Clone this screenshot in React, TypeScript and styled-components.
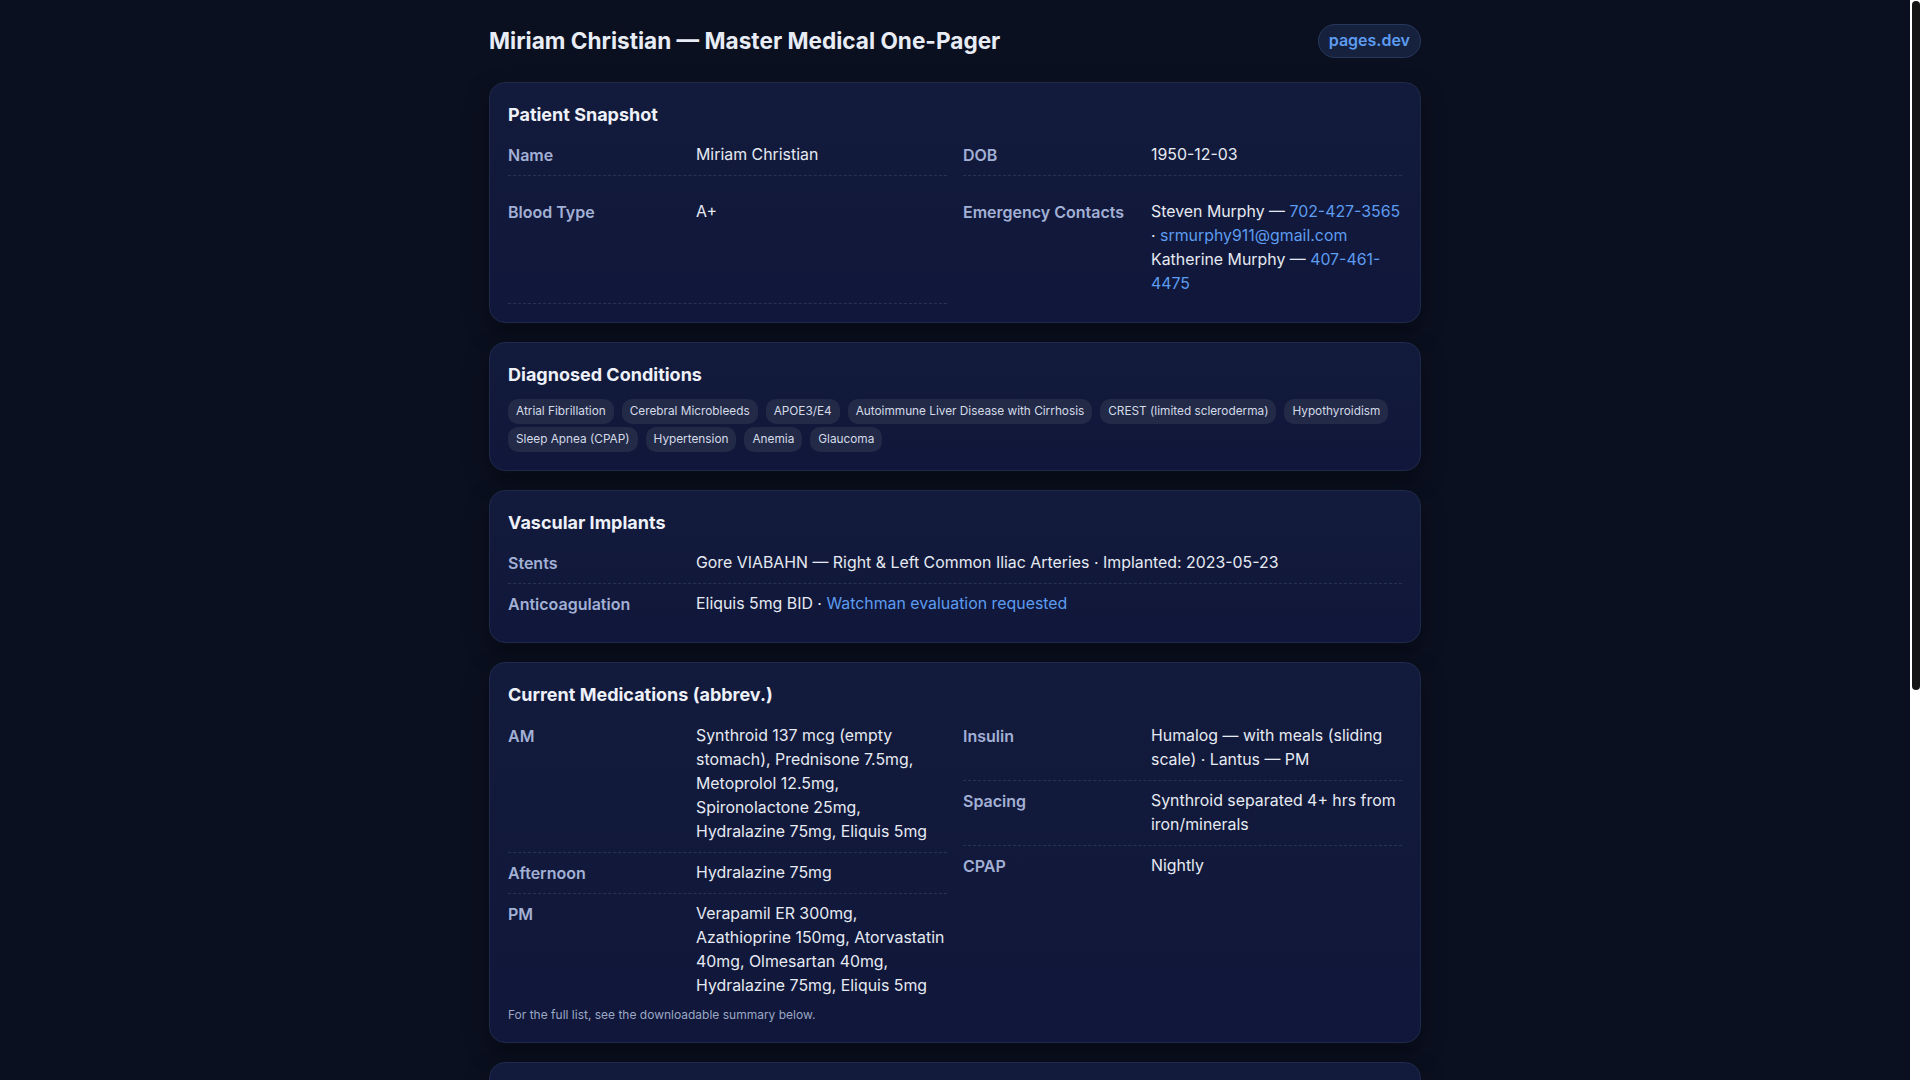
import React, { useEffect, useState } from 'react';
import styled, { createGlobalStyle } from 'styled-components';

const GlobalStyle = createGlobalStyle`
  html, body {
    margin: 0;
    padding: 0;
    background: #0b1020;
    color: #e6eaf2;
    font-family: Inter, "Noto Sans", "Liberation Sans", sans-serif;
  }
  body { padding-right: 10px; }
  * { box-sizing: border-box; }
`;

const ScrollTrack = styled.div`
  position: fixed;
  top: 0;
  right: 0;
  bottom: 0;
  width: 10px;
  background: #ffffff;
  padding: 1px 0 0 2px;
`;

const ScrollThumb = styled.div`
  width: 8px;
  background: #151515;
  border-radius: 4px;
`;

const Page = styled.main`
  max-width: 980px;
  margin: 0 auto;
  padding: 24px;
`;

const Header = styled.header`
  display: flex;
  align-items: center;
  justify-content: space-between;
  margin-bottom: 24px;
`;

const Title = styled.h1`
  margin: 0;
  font-size: 22.6px;
  line-height: 1.2;
  font-weight: 700;
  color: #e8ecf5;
`;

const HostPill = styled.a`
  display: inline-block;
  padding: 6px 10px;
  border-radius: 999px;
  border: 1px solid #27385c;
  background: #15213d;
  color: #5d9cf0;
  font-size: 16px;
  line-height: 19.5px;
  font-weight: 600;
  text-decoration: none;
`;

const Card = styled.section`
  background: linear-gradient(180deg, #131b3d 0%, #10173a 100%);
  border: 1px solid #1f2949;
  border-radius: 16px;
  padding: 18px;
  margin-bottom: 19px;
  box-shadow: 0 10px 24px rgba(0, 0, 0, 0.35);
`;

const CardTitle = styled.h2`
  margin: 3px 0 10px;
  font-size: 18px;
  line-height: 1.2;
  font-weight: 700;
  color: #eef1f8;
`;

const TwoCol = styled.div<{ $rowGap?: number }>`
  display: grid;
  grid-template-columns: 1fr 1fr;
  column-gap: 16px;
  row-gap: ${(p) => p.$rowGap ?? 0}px;
  align-items: ${(p) => (p.$rowGap ? 'stretch' : 'start')};
`;

const Stack = styled.div`
  display: flex;
  flex-direction: column;
`;

const Row = styled.div`
  display: grid;
  grid-template-columns: 180px 1fr;
  column-gap: 8px;
  align-items: start;
  padding: 8px 0;
  border-bottom: 1px dashed #283253;
  font-size: 16px;
  line-height: 24px;

  &:last-child {
    border-bottom: none;
  }
`;

const Label = styled.div`
  font-weight: 600;
  color: #a2b0d5;
`;

const Value = styled.div`
  color: #e6eaf2;
  font-size: 15.88px;
`;

const Link = styled.a`
  color: #5d9cf0;
  text-decoration: none;
`;

const ChipList = styled.div`
  display: flex;
  flex-wrap: wrap;
  gap: 3px 8px;
  padding-top: 3px;
`;

const Chip = styled.span`
  display: inline-block;
  padding: 4px 8px;
  border-radius: 10px;
  background: #222a47;
  color: #d5dae7;
  font-size: 11.8px;
  line-height: 17px;
`;

const Note = styled.p`
  margin: 1px 0 1px;
  font-size: 12px;
  line-height: 16px;
  color: #9ba7c4;
`;

const ButtonRow = styled.div`
  display: flex;
  gap: 10px;
  flex-wrap: wrap;
  padding-top: 4px;
`;

const DownloadButton = styled.a`
  display: inline-block;
  padding: 8px 14px;
  border-radius: 10px;
  border: 1px solid #2a3b63;
  background: #17244a;
  color: #8cb8f5;
  font-size: 14px;
  font-weight: 600;
  text-decoration: none;
`;

const conditions = [
  'Atrial Fibrillation',
  'Cerebral Microbleeds',
  'APOE3/E4',
  'Autoimmune Liver Disease with Cirrhosis',
  'CREST (limited scleroderma)',
  'Hypothyroidism',
  'Sleep Apnea (CPAP)',
  'Hypertension',
  'Anemia',
  'Glaucoma',
];

const medsLeft = [
  {
    label: 'AM',
    value:
      'Synthroid 137 mcg (empty stomach), Prednisone 7.5mg, Metoprolol 12.5mg, Spironolactone 25mg, Hydralazine 75mg, Eliquis 5mg',
  },
  { label: 'Afternoon', value: 'Hydralazine 75mg' },
  {
    label: 'PM',
    value:
      'Verapamil ER 300mg, Azathioprine 150mg, Atorvastatin 40mg, Olmesartan 40mg, Hydralazine 75mg, Eliquis 5mg',
  },
];

const medsRight = [
  { label: 'Insulin', value: 'Humalog — with meals (sliding scale) · Lantus — PM' },
  { label: 'Spacing', value: 'Synthroid separated 4+ hrs from iron/minerals' },
  { label: 'CPAP', value: 'Nightly' },
];

const careTeam = [
  { label: 'Cardiology', value: 'Electrophysiology — AFib management' },
  { label: 'Hepatology', value: 'Autoimmune liver disease follow-up' },
  { label: 'Neurology', value: 'Cerebral microbleeds monitoring' },
  { label: 'Rheumatology', value: 'CREST (limited scleroderma)' },
  { label: 'Vascular Surgery', value: 'Iliac stent surveillance' },
  { label: 'Ophthalmology', value: 'Glaucoma checks' },
];

const history = [
  { label: '2023-05-23', value: 'Bilateral common iliac stenting (Gore VIABAHN)' },
  { label: 'Sleep Study', value: 'Obstructive sleep apnea — CPAP initiated' },
  { label: 'Imaging', value: 'MRI brain — cerebral microbleeds noted' },
];

function FakeScrollbar() {
  const [thumb, setThumb] = useState(690);
  useEffect(() => {
    const doc = document.documentElement;
    const h = window.innerHeight;
    setThumb(Math.round((h / doc.scrollHeight) * h));
  }, []);
  return (
    <ScrollTrack>
      <ScrollThumb style={{ height: thumb }} />
    </ScrollTrack>
  );
}

export default function App() {
  return (
    <>
      <GlobalStyle />
      <Page>
        <Header>
          <Title>Miriam Christian — Master Medical One-Pager</Title>
          <HostPill href="#">pages.dev</HostPill>
        </Header>

        <Card>
          <CardTitle>Patient Snapshot</CardTitle>
          <TwoCol $rowGap={16}>
            <Row>
              <Label>Name</Label>
              <Value>Miriam Christian</Value>
            </Row>
            <Row>
              <Label>DOB</Label>
              <Value>1950-12-03</Value>
            </Row>
            <Row>
              <Label>Blood Type</Label>
              <Value>A+</Value>
            </Row>
            <Row>
              <Label>Emergency Contacts</Label>
              <Value>
                <div>
                  Steven Murphy — <Link href="#">702-427-3565</Link> ·{' '}
                  <Link href="#">srmurphy911@gmail.com</Link>
                </div>
                <div>
                  Katherine Murphy — <Link href="#">407-461-4475</Link>
                </div>
              </Value>
            </Row>
          </TwoCol>
        </Card>

        <Card>
          <CardTitle>Diagnosed Conditions</CardTitle>
          <ChipList>
            {conditions.map((c) => (
              <Chip key={c}>{c}</Chip>
            ))}
          </ChipList>
        </Card>

        <Card>
          <CardTitle>Vascular Implants</CardTitle>
          <Stack>
            <Row>
              <Label>Stents</Label>
              <Value>
                Gore VIABAHN — Right &amp; Left Common Iliac Arteries · Implanted: 2023-05-23
              </Value>
            </Row>
            <Row>
              <Label>Anticoagulation</Label>
              <Value>
                Eliquis 5mg BID · <Link href="#">Watchman evaluation requested</Link>
              </Value>
            </Row>
          </Stack>
        </Card>

        <Card>
          <CardTitle>Current Medications (abbrev.)</CardTitle>
          <TwoCol>
            <Stack>
              {medsLeft.map((m) => (
                <Row key={m.label}>
                  <Label>{m.label}</Label>
                  <Value>{m.value}</Value>
                </Row>
              ))}
            </Stack>
            <Stack>
              {medsRight.map((m) => (
                <Row key={m.label}>
                  <Label>{m.label}</Label>
                  <Value>{m.value}</Value>
                </Row>
              ))}
            </Stack>
          </TwoCol>
          <Note>For the full list, see the downloadable summary below.</Note>
        </Card>

        <Card>
          <CardTitle>Care Team</CardTitle>
          <TwoCol>
            <Stack>
              {careTeam.slice(0, 3).map((m) => (
                <Row key={m.label}>
                  <Label>{m.label}</Label>
                  <Value>{m.value}</Value>
                </Row>
              ))}
            </Stack>
            <Stack>
              {careTeam.slice(3).map((m) => (
                <Row key={m.label}>
                  <Label>{m.label}</Label>
                  <Value>{m.value}</Value>
                </Row>
              ))}
            </Stack>
          </TwoCol>
        </Card>

        <Card>
          <CardTitle>Procedure History</CardTitle>
          <Stack>
            {history.map((m) => (
              <Row key={m.label}>
                <Label>{m.label}</Label>
                <Value>{m.value}</Value>
              </Row>
            ))}
          </Stack>
        </Card>

        <Card>
          <CardTitle>Downloadable Summary</CardTitle>
          <ButtonRow>
            <DownloadButton href="#">Full medication list (PDF)</DownloadButton>
            <DownloadButton href="#">Medical history (PDF)</DownloadButton>
            <DownloadButton href="#">Wallet card (PDF)</DownloadButton>
          </ButtonRow>
        </Card>
      </Page>
      <FakeScrollbar />
    </>
  );
}
